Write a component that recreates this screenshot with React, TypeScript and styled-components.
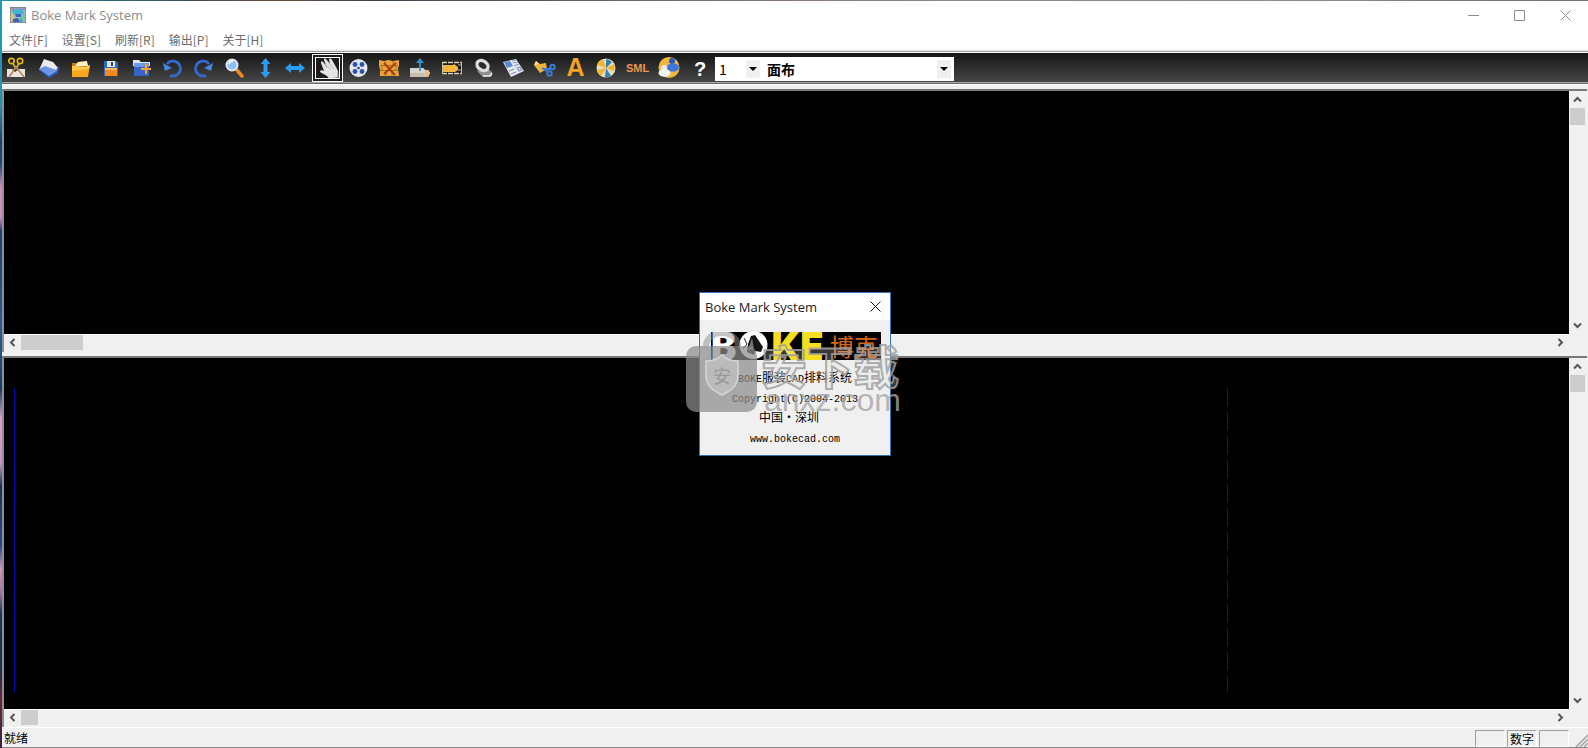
import React from 'react';
import styled, { createGlobalStyle, css } from 'styled-components';

const Global = createGlobalStyle`
  * { box-sizing: border-box; }
  html, body { margin: 0; height: 100%; }
  #root { height: 100%; }
  body { background: #f0f0f0; color: #000; font: 12px/16px "Noto Sans CJK SC", sans-serif; overflow: hidden; }
  button, select { font: inherit; color: inherit; margin: 0; padding: 0; border: 0; border-radius: 0; }
  svg { display: block; }
`;

const Desktop = styled.div`
  position: relative;
  min-height: 100vh;
  padding: 1px 0 0 2px;
  display: flex;
  background:
    linear-gradient(90deg, #1f93ac, #3c4a55 12%, #6a4a3a 17%, #3a4650 24%, #8a7c7c 50%, #8d8d8d 80%, #6f6f75) top / 100% 1px no-repeat,
    linear-gradient(180deg, #1c9ab5 0, #2790b8 14%, #1b3f78 19%, #1e4a80 22%, #d688c4 25%, #d688c4 29%, #1d3f74 31%, #2b5aa0 44%, #1a3a66 52%, #d9a0d6 56%, #c890cc 62%, #1c3058 65%, #2a4a90 73%, #d890c8 76%, #b070b0 79%, #20345c 82%, #1d2c50 90%, #6b2440 93%, #402040 100%);
`;

const Window = styled.main`
  position: relative;
  flex: 1;
  min-width: 0;
  display: flex;
  flex-direction: column;
  background: #f0f0f0;
  border-bottom: 1px solid #8a8a8a;
`;

const TitleBar = styled.header`
  display: flex;
  align-items: center;
  height: 30px;
  padding: 0 0 2px 8px;
  background: #fff;
  color: #8d8d8d;
`;

const Title = styled.h1`
  flex: 1;
  margin: 0 0 0 5px;
  font: 400 13px/18px "Open Sans", sans-serif;
`;

const CaptionButton = styled.button`
  width: 46px;
  height: 28px;
  display: grid;
  place-items: center;
  background: none;
  color: #8d8d8d;
`;

const MenuBar = styled.nav`
  display: flex;
  gap: 14px;
  height: 18px;
  padding-left: 7px;
  background: #fff;
`;

const MenuItem = styled.button`
  background: none;
  color: #6c6c6c;
  line-height: 18px;
  white-space: nowrap;
`;

const ToolBand = styled.div`
  border-top: 2px solid #f0f0f0;
  border-bottom: 1px solid #fff;
`;

const ToolBar = styled.div`
  display: flex;
  height: 33px;
  border-top: 1px solid #9b9b9b;
  border-bottom: 1px solid #6a6a6a;
  box-shadow: inset 0 1px #fff, inset 0 -1px #a5a5a5;
  padding: 2px 0 1px;
  background: linear-gradient(180deg, #141414, #484848) padding-box;
`;

const Tool = styled.button<{ $active?: boolean }>`
  flex: none;
  width: 31px;
  height: 28px;
  background: none;
  ${(p) => p.$active && css`
    background: #1c1c1c;
    border: 1px solid #fff;
    outline: 1px solid #fff;
    outline-offset: -4px;
    svg { margin: -1px; }
  `}
`;

const Combo = styled.label<{ $wide?: boolean }>`
  position: relative;
  width: ${(p) => (p.$wide ? 191 : 48)}px;
  height: 24px;
  margin-top: 3px;
  background: #fff;
`;

const ComboSelect = styled.select<{ $bold?: boolean }>`
  width: 100%;
  height: 24px;
  padding-left: 4px;
  appearance: none;
  background: linear-gradient(#f0f0f0, #f0f0f0) right 3px center / 14px 18px no-repeat #fff;
  font-weight: ${(p) => (p.$bold ? 700 : 400)};
  font-size: 14px;
  line-height: 24px;
  outline: none;
`;

const ComboArrow = styled.svg`
  position: absolute;
  right: 6px;
  top: 10px;
  pointer-events: none;
`;

const Pane = styled.section<{ $share: number }>`
  flex: ${(p) => p.$share} 1 0;
  min-height: 0;
  display: grid;
  grid-template-columns: minmax(0, 1fr) 18px;
  grid-template-rows: minmax(0, 1fr) 18px;
  margin: 4px 1px 0 0;
  border: solid #6a6a6a;
  border-width: 2px 0 0 2px;
  border-top-color: #777;
  border-left-color: #8f8f8f;
`;

const Canvas = styled.div`
  display: flex;
  justify-content: space-between;
  padding: 30px 341px 17px 10px;
  background: #000;
`;

const Guide = styled.div<{ $dashed?: boolean }>`
  width: 1px;
  background: ${(p) => (p.$dashed
    ? 'repeating-linear-gradient(180deg, #0a0ac8 0 18px, #000 18px 24px)'
    : '#0a0ab8')};
`;

const ScrollBar = styled.div<{ $vertical?: boolean }>`
  display: flex;
  flex-direction: ${(p) => (p.$vertical ? 'column' : 'row')};
  padding: ${(p) => (p.$vertical ? '0 2px 0 1px' : '0 0 2px')};
  border-top: ${(p) => (p.$vertical ? '0' : '1px solid #fff')};
  background: #f0f0f0;
`;

const ScrollButton = styled.button<{ $vertical?: boolean }>`
  flex: none;
  width: ${(p) => (p.$vertical ? 15 : 17)}px;
  height: ${(p) => (p.$vertical ? 17 : 15)}px;
  display: grid;
  place-items: center;
  background: none;
`;

const Track = styled.div<{ $vertical?: boolean }>`
  flex: 1;
  display: flex;
  flex-direction: ${(p) => (p.$vertical ? 'column' : 'row')};
`;

const Thumb = styled.div<{ $length: number }>`
  flex: 0 0 ${(p) => p.$length}px;
  background: #cdcdcd;
`;

const StatusBar = styled.footer`
  display: flex;
  align-items: center;
  height: 20px;
  border-top: 1px solid #fff;
  padding-left: 2px;
`;

const StatusText = styled.span`
  flex: 1;
  line-height: 18px;
`;

const StatusCell = styled.span`
  width: 30px;
  height: 17px;
  margin: 2px 2px 0 0;
  border: 1px solid #a0a0a0;
  border-right-color: #fff;
  border-bottom-color: #fff;
  text-align: center;
  line-height: 16px;
`;

const Dialog = styled.section`
  position: absolute;
  inset: 0;
  margin: auto;
  width: 192px;
  height: 164px;
  border: 1px solid #2f6fb0;
  background: #f0f0f0;
`;

const DialogTitle = styled.div`
  display: flex;
  align-items: center;
  height: 27px;
  background: #fff;
  color: #222;
`;

const DialogClose = styled(CaptionButton)`
  width: 30px;
  height: 26px;
  color: #111;
`;

const Banner = styled.div`
  display: flex;
  align-items: center;
  gap: 3px;
  height: 28px;
  margin: 12px 9px 7px 11px;
  background: #000;
`;

const BannerText = styled.span<{ $color: string }>`
  color: ${(p) => p.$color};
  font: 900 38px/28px Inter, sans-serif;
`;

const BannerHan = styled.span`
  margin-left: auto;
  padding-right: 3px;
  color: #d4661c;
  font-size: 24px;
  line-height: 28px;
`;

const About = styled.p`
  margin: 0;
  height: 20px;
  text-align: center;
  line-height: 20px;
  white-space: pre;
`;

const Half = styled.span`
  font-family: "Liberation Mono", monospace;
  font-size: 10px;
`;

const Watermark = styled.div`
  position: absolute;
  inset: 0;
  margin: auto;
  width: 216px;
  height: 84px;
  display: flex;
  gap: 4px;
  pointer-events: none;
`;

const MarkWords = styled.div`
  flex: 1;
  padding-top: 8px;
  white-space: nowrap;
`;

const MarkHan = styled.div`
  height: 46px;
  color: rgba(225, 225, 225, 0.25);
  font-size: 46px;
  font-weight: 700;
  line-height: 48px;
  -webkit-text-stroke: 2px rgba(160, 160, 160, 0.85);
`;

const MarkDomain = styled.div`
  padding-left: 3px;
  color: rgba(165, 165, 165, 0.8);
  font: 32px/28px "Liberation Sans", sans-serif;
`;

const Chevron = ({ d }: { d: string }) => (
  <svg width="9" height="9" viewBox="0 0 9 9" fill="none" stroke="#555" strokeWidth="2"><path d={d} /></svg>
);
const up = 'M1 6.5L4.5 3L8 6.5';
const down = 'M1 2.5L4.5 6L8 2.5';
const left = 'M6.5 1L3 4.5L6.5 8';
const right = 'M2.5 1L6 4.5L2.5 8';

const VScroll = () => (
  <ScrollBar $vertical>
    <ScrollButton $vertical aria-label="向上"><Chevron d={up} /></ScrollButton>
    <Track $vertical><Thumb $length={17} /></Track>
    <ScrollButton $vertical aria-label="向下"><Chevron d={down} /></ScrollButton>
  </ScrollBar>
);

const HScroll = ({ length }: { length: number }) => (
  <ScrollBar>
    <ScrollButton aria-label="向左"><Chevron d={left} /></ScrollButton>
    <Track><Thumb $length={length} /></Track>
    <ScrollButton aria-label="向右"><Chevron d={right} /></ScrollButton>
  </ScrollBar>
);

const tools: { name: string; art: React.ReactNode; active?: boolean }[] = [
  { name: '裁剪', art: <>
    <path d="M5 15h5l3 3 4-3h6v8H5z" fill="#e9e6e1" />
    <g fill="none" stroke="#e0b81c" strokeWidth="1.7"><circle cx="9.500" cy="7" r="2.700" /><circle cx="18" cy="7" r="2.700" /><path d="M11 10l3 4 3-4" /></g>
    <path d="M14 13L7 23M14 13l8 10" stroke="#b98750" strokeWidth="1.600" /></> },
  { name: '新建', art: <>
    <path d="M11 5l9 3 5 6-2 3-12-3-5 2z" fill="#e9ebef" />
    <path d="M6 16l6-3 11 3 3-4-1 7-9 5z" fill="#2b57bd" /><path d="M6 15l6-3 11 4 3-3-2 4-8 5z" fill="#6f97e6" /></> },
  { name: '打开', art: <>
    <path d="M8 9h5l2 2h9v11H8z" fill="#c97f12" /><path d="M14 8l9-1 1 5H11z" fill="#fff1c8" />
    <path d="M8 12l14 1 4-2-2 12H8z" fill="#f9a51d" /><path d="M8 12l14 1 4-2-1 4-17 2z" fill="#ffc94d" /></> },
  { name: '保存', art: <>
    <path d="M9 7h12l2 2v13H9z" fill="#2f6bc4" /><path d="M12 7h8v6h-8z" fill="#dfe6f0" /><path d="M16 8h2v4h-2z" fill="#345" />
    <path d="M10 14h12v8H10z" fill="#f58a1c" /><path d="M10 14h12v2H10z" fill="#ffb863" /></> },
  { name: '添加', art: <>
    <path d="M7 6h6l2 2h9v4H7z" fill="#dfe4ee" /><path d="M8 9h15v13H8z" fill="#3763c6" /><path d="M8 9h15v4H8z" fill="#6f98e6" />
    <path d="M20 10v10M15 15h10" stroke="#f7a72b" strokeWidth="2" /></> },
  { name: '撤销', art: <>
    <path d="M10 10a7.500 7.500 0 1 1 3 11.500" fill="none" stroke="#3468cc" strokeWidth="2.800" /><path d="M6 9l2 8 7-3z" fill="#4a84e2" /></> },
  { name: '重做', art: <>
    <path d="M18 21.500a7.500 7.500 0 1 1 3-11.500" fill="none" stroke="#3468cc" strokeWidth="2.800" /><path d="M25 9l-2 8-7-3z" fill="#4a84e2" /></> },
  { name: '缩放', art: <>
    <path d="M17 15l6 7" stroke="#ee8a25" strokeWidth="3.500" strokeLinecap="round" />
    <circle cx="13" cy="11" r="5.500" fill="#8fc2f4" stroke="#dfe8f3" strokeWidth="2" /><path d="M10 10a4 4 0 0 1 4-3" stroke="#fff" strokeWidth="1.500" fill="none" /></> },
  { name: '纵向', art: <path d="M15.500 4l5 6h-3v8h3l-5 6-5-6h3v-8h-3z" fill="#2a9df0" /> },
  { name: '横向', art: <path d="M4 14l6-5v3h8V9l6 5-6 5v-3h-8v3z" fill="#2a9df0" /> },
  { name: '移动', active: true, art: <>
    <path d="M9 9c0-2 1-2 2-1l3 3-2-5c0-2 1-2 2-1l4 5-1-4c0-2 2-2 3 0l4 7 2 4 0 6-5 2c-3 0-5-1-6-3l-7-4c0-2 2-2 4-1z" fill="#e4e4e4" />
    <path d="M19 24l6-1 1-6 1 6-3 2z" fill="#999" /><path d="M14 11l5 5M18 10l4 5M11 8l4 6" stroke="#a9a9a9" strokeWidth=".8" /></> },
  { name: '排料', art: <>
    <circle cx="15.500" cy="14" r="9" fill="#e2e6ee" /><circle cx="15.500" cy="14" r="1.300" fill="#26408a" />
    <g fill="#2b53ac"><circle cx="12" cy="10.500" r="2.400" /><circle cx="19" cy="10.500" r="2.400" /><circle cx="12" cy="17.500" r="2.400" /><circle cx="19" cy="17.500" r="2.400" /></g></> },
  { name: '清除', art: <>
    <path d="M5 6l5 1 4-1 5 1 6-1v6l-1 2 1 8H6V15l-1-3z" fill="#eda33c" /><path d="M6 11.500h18M6 16.500h18M11 7v4M19 7v4M8 12v4M22 12v4M12 17v5M18 17v5" stroke="#9c6420" strokeWidth=".8" />
    <path d="M10 9l11 12M22 9L10 20" stroke="#a83f10" strokeWidth="2.200" /></> },
  { name: '放置', art: <>
    <path d="M5 14h13l2 2h3l2 3-2 4H5z" fill="#c9bfae" /><path d="M5 14h13l2 2h3l2 3H5z" fill="#d8d5cf" /><path d="M20 16h3l2 3-2 4h-3z" fill="#e9bd7e" />
    <path d="M15 17V8" stroke="#3693d8" strokeWidth="1.800" /><path d="M15 4l4 5h-8z" fill="#3693d8" /></> },
  { name: '布料', art: <>
    <path d="M6 8h20v12H6z" fill="#1a1a1a" /><path d="M6 8.500h20M6 19.500h20" stroke="#ddd3bd" strokeWidth="1.500" strokeDasharray="5 1" />
    <path d="M6.500 8v12M25.500 8v12M22 11h4M22 16h4" stroke="#c8bda0" /><path d="M7 11h10l1-1 4 3v3l-3 2H7z" fill="#f6b63c" /></> },
  { name: '布卷', art: <>
    <path d="M10 17l6 6 9-1v-4l-5-4z" fill="#8f8f8f" /><ellipse cx="15.500" cy="11.500" rx="6" ry="4.500" transform="rotate(35 15.500 11.500)" fill="#2a2a2a" stroke="#dcdcdc" strokeWidth="3.400" /><path d="M16 22l7 0 2-3" stroke="#eee" fill="none" strokeWidth="1.500" /></> },
  { name: '报表', art: <>
    <path d="M5 8l13-3 8 12-13 6z" fill="#e6eaf2" /><path d="M6 8l6-1 3 5-6 2z" fill="#5b86d6" /><path d="M14 7l4-1M15 9l5-1M16 12l5-2M11 17l5-2M13 20l5-2M19 14l3-1 2 3-3 1z" stroke="#8b99b5" strokeWidth="1.200" fill="#cfd6e4" /></> },
  { name: '切割', art: <>
    <path d="M5 11l2-4 4 3 6-1 1 6-7 4z" fill="#f0b53d" /><path d="M5 11l2-4 3 3z" fill="#ffe09a" />
    <g fill="none" stroke="#3b7bd4" strokeWidth="2"><path d="M14 15l9 0M13 14l6 4" /><circle cx="23.500" cy="13" r="2.200" /><circle cx="20.500" cy="19.500" r="2.200" /></g></> },
  { name: '文字', art: <text x="15.500" y="22" textAnchor="middle" fontFamily="Liberation Sans, sans-serif" fontWeight="700" fontSize="25" fill="#f6a125">A</text> },
  { name: '颜色', art: <>
    <circle cx="15" cy="14" r="9.500" fill="#e8ddbe" /><path d="M15 14V5a9 9 0 0 1 6 3z" fill="#2d82b8" /><path d="M15 14l8-4a9 9 0 0 1 0 7z" fill="#f1b635" /><path d="M15 14l5 8a9 9 0 0 1-6 1z" fill="#2d82b8" /><path d="M15 14l-5 8a9 9 0 0 1-4-6z" fill="#f1b635" /><path d="M15 14L6 11a9 9 0 0 1 6-6z" fill="#f1b635" /></> },
  { name: '尺码', art: <text x="15.500" y="18" textAnchor="middle" fontFamily="Liberation Sans, sans-serif" fontWeight="700" fontSize="11" fill="#ee964a">SML</text> },
  { name: '用户', art: <>
    <circle cx="16" cy="13.500" r="10.500" fill="#f4b73c" /><circle cx="19" cy="7" r="3" fill="#2559c2" /><ellipse cx="20" cy="13.500" rx="6" ry="4.200" fill="#3c78dc" />
    <circle cx="11" cy="14" r="3" fill="#e8eaf0" /><ellipse cx="11.500" cy="19" rx="6" ry="3.800" fill="#f3f4f7" /></> },
  { name: '帮助', art: <text x="16" y="22" textAnchor="middle" fontFamily="Liberation Sans, sans-serif" fontWeight="700" fontSize="20" fill="#fff">?</text> },
];

const AppIcon = () => (
  <svg width="16" height="16" viewBox="0 0 16 16">
    <path d="M0 0h16v16H0z" fill="#a9b5c5" /><path d="M0 0h16v3H0z" fill="#a78fc0" /><path d="M2 3l4-1 7 0 1 5-6 1-5-1z" fill="#45b4cc" />
    <path d="M0 5l3 1 1 4-2 5-2 0z" fill="#c8cf6c" /><path d="M5 7h6v3H6z" fill="#3c62c0" /><path d="M12 8h3v5h-3z" fill="#72c5a0" /><path d="M3 12l5-1 2 4H3z" fill="#4a5cb0" /><path d="M11 10l2 5H9z" fill="#35b0c0" />
    <path d="M.5.5h15v15H.5z" fill="none" stroke="#778" strokeDasharray="2 1" />
  </svg>
);

const Cross = () => (
  <svg width="11" height="11" viewBox="0 0 11 11"><path d="M.5.5l10 10M10.500.5l-10 10" stroke="currentColor" /></svg>
);

export default function App() {
  return (
    <Desktop>
      <Global />
      <Window>
        <TitleBar>
          <AppIcon />
          <Title>Boke Mark System</Title>
          <CaptionButton aria-label="最小化"><svg width="11" height="11"><path d="M0 5.500h11" stroke="currentColor" /></svg></CaptionButton>
          <CaptionButton aria-label="最大化"><svg width="11" height="11"><path d="M.5.5h10v10H.5z" fill="none" stroke="currentColor" /></svg></CaptionButton>
          <CaptionButton aria-label="关闭"><Cross /></CaptionButton>
        </TitleBar>
        <MenuBar>
          {['文件[F]', '设置[S]', '刷新[R]', '输出[P]', '关于[H]'].map((m) => <MenuItem key={m}>{m}</MenuItem>)}
        </MenuBar>
        <ToolBand>
          <ToolBar>
            {tools.map((t) => (
              <Tool key={t.name} aria-label={t.name} $active={t.active}>
                <svg width="31" height="28" viewBox="0 0 31 28">{t.art}</svg>
              </Tool>
            ))}
            <Combo>
              <ComboSelect aria-label="床次"><option>1</option></ComboSelect>
              <ComboArrow width="8" height="4"><path d="M0 0h8L4 4z" /></ComboArrow>
            </Combo>
            <Combo $wide>
              <ComboSelect $bold aria-label="布料种类"><option>面布</option></ComboSelect>
              <ComboArrow width="8" height="4"><path d="M0 0h8L4 4z" /></ComboArrow>
            </Combo>
          </ToolBar>
        </ToolBand>
        <Pane $share={263}>
          <Canvas />
          <VScroll />
          <HScroll length={62} />
        </Pane>
        <Pane $share={372}>
          <Canvas><Guide /><Guide $dashed /></Canvas>
          <VScroll />
          <HScroll length={17} />
        </Pane>
        <StatusBar>
          <StatusText>就绪</StatusText>
          <StatusCell />
          <StatusCell>数字</StatusCell>
          <StatusCell />
          <svg width="17" height="18" stroke="#a0a0a0" strokeWidth="1.500"><path d="M5 18L17 6M9 18l8-8M13 18l4-4" /></svg>
        </StatusBar>

        <Dialog role="dialog" aria-label="Boke Mark System">
          <DialogTitle>
            <Title as="h2">Boke Mark System</Title>
            <DialogClose aria-label="关闭对话框"><Cross /></DialogClose>
          </DialogTitle>
          <Banner>
            <BannerText $color="#fff">B</BannerText>
            <svg width="29" height="28" viewBox="0 0 29 28">
              <circle cx="14.500" cy="13" r="14" fill="#fff" />
              <path d="M12 4l4-1 8 12-2 5-6-1-1 4-7-3 1-8z" fill="#151515" /><path d="M13 6l2 11-6 1z" fill="#777" /><path d="M5 6l3 6-4 5" fill="none" stroke="#222" />
            </svg>
            <BannerText $color="#f5df1e">KE</BannerText>
            <BannerHan>博克</BannerHan>
          </Banner>
          <About><Half>BOKE</Half>服装<Half>CAD</Half>排料系统</About>
          <About><Half>Copyright(C)2004-2013</Half></About>
          <About>中国・深圳　</About>
          <About><Half>www.bokecad.com</Half></About>
        </Dialog>
      </Window>

      <Watermark>
        <svg width="71" height="84" viewBox="0 0 71 84">
          <path d="M20 14a16 13 0 0 1 32 0" fill="none" stroke="#8c8c8c" strokeOpacity=".5" strokeWidth="6" />
          <rect y="14" width="71" height="66" rx="10" fill="#8c8c8c" fillOpacity=".72" />
          <path d="M36 23c5 5 10 6 16 6v15c0 9-6 14-16 19-10-5-16-10-16-19V29c6 0 11-1 16-6z" fill="#c8c8c8" fillOpacity=".6" stroke="#d5d5d5" strokeWidth="1.500" />
          <text x="36" y="51" textAnchor="middle" fontFamily="Noto Sans CJK SC, sans-serif" fontSize="18" fill="#999">安</text>
        </svg>
        <MarkWords>
          <MarkHan>安下载</MarkHan>
          <MarkDomain>anxz.com</MarkDomain>
        </MarkWords>
      </Watermark>
    </Desktop>
  );
}
